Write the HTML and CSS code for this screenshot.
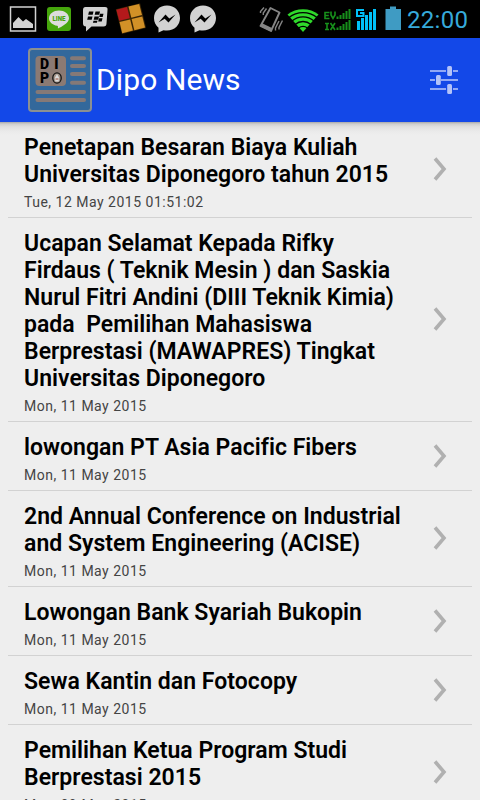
FILE: index.html
```html
<!DOCTYPE html>
<html lang="id">
<head>
<meta charset="utf-8">
<title>Dipo News</title>
<link rel="stylesheet" href="styles.css">
</head>
<body>
<svg class="defs" width="0" height="0">
  <symbol id="chevron" viewBox="0 0 16 26"><path d="M3 2.500 12 13 3 23.500" fill="none" stroke="#b0b0b0" stroke-width="3.600"/></symbol>
  <symbol id="messenger" viewBox="0 0 28 38"><path d="M14 5.500C6.500 5.500 1 11 1 18c0 4 1.700 7.500 4.500 9.700V32.500l5-2.300c1.100.3 2.300.4 3.500.4 7.500 0 13-5.300 13-12.500S21.500 5.500 14 5.500z" fill="#d2d2d2"/><path d="M5.500 22.500 12.500 14.500 16.300 18.400 22.500 14.500 15.500 22.500 11.700 18.800z" fill="#000"/></symbol>
</svg>
<div class="status">
  <svg class="s-image" width="30" height="38" viewBox="8 0 30 38"><rect x="10.500" y="7" width="25" height="24" fill="none" stroke="#d2d2d2" stroke-width="1.500"/><path d="M13 28v-5l5.500-6 4.500 4.500 3-2.500 7 5v4z" fill="#d2d2d2"/></svg>
  <svg class="s-line" width="26" height="38" viewBox="46 0 26 38"><rect x="47" y="7" width="24" height="24" rx="3" fill="#45a60c"/><path d="M59 10.500c-5.500 0-10 3.400-10 7.700 0 3.800 3.500 6.800 8.200 7.500 1 .3.800 1 .7 2.800 3.500-1.700 11.100-5.500 11.100-10.300 0-4.300-4.500-7.700-10-7.700z" fill="#dcdcdc"/><text class="line-word" x="52.500" y="20.800" textLength="13" lengthAdjust="spacingAndGlyphs">LINE</text></svg>
  <svg class="s-bbm" width="28" height="38" viewBox="81 0 28 38"><path d="M85.500 7H105q3 0 2.500 3l-1 13.500q0 3-3 3H91.500l-5.500 5v-5q-3 0-3-3V10q0-3 2.500-3z" fill="#d2d2d2"/><path d="M89 11.500h4.500l-.8 3.300h-4.500zM95.500 11.500h4.500l-.8 3.300h-4.500zM88 16.500h4.500l-.8 3.300h-4.500zM94.500 16.500h4.500l-.8 3.300h-4.500zM100 13.800h3.500l-.8 3.300h-3.500zM99 18.200h3.500l-.8 3.300h-3.500zM93.500 20.800h4l-.6 1.900h-4z" fill="#000"/></svg>
  <svg class="s-office" width="32" height="38" viewBox="114 0 32 38"><g transform="rotate(-14 130.500 18.700)"><rect x="118.500" y="6" width="25" height="25.500" fill="#3a2505"/><rect x="119" y="6.500" width="11" height="11.500" fill="#b3191b"/><rect x="131.500" y="6.500" width="11" height="11.500" fill="#d29127"/><rect x="119" y="19.300" width="11" height="11.500" fill="#d29127"/><rect x="131.500" y="19.300" width="11" height="11.500" fill="#d29127"/></g></svg>
  <svg class="s-msg" width="28" height="38"><use href="#messenger"/></svg>
  <svg class="s-msg2" width="28" height="38"><use href="#messenger"/></svg>
  <svg class="s-vibrate" width="26" height="38" viewBox="257 0 26 38"><g fill="none" stroke="#858585" stroke-width="1.400"><path d="M260.500 13v-1.500l3.500-4M263.300 15v-2l3.200-4.500M279 21l-3.500 7v2.500M282.500 20.500l-3.500 7v2"/></g><path d="M270.500 8 279.500 12.500 271 31 260.500 26z" fill="none" stroke="#858585" stroke-width="1.900" stroke-linejoin="round"/><path d="m261.500 23 10.500 5-1.500 3.500-10-5z" fill="#858585"/></svg>
  <svg class="s-wifi" width="32" height="38" viewBox="287 0 32 38"><path d="M303 32 287.500 14.500C296 7.500 310 7.500 318.500 14.500z" fill="#2fd92b"/><g fill="none" stroke="#000" stroke-width="1.400"><path d="M289 17.500c8-6.500 20-6.500 28 0M292 21c6.500-5.500 15.500-5.500 22 0M295 24.500c4.800-4 11.200-4 16 0M298.500 28c2.800-2 6.200-2 9 0"/></g></svg>
  <svg class="s-dual" width="28" height="38" viewBox="323 0 28 38"><g fill="none" stroke="#17901b" stroke-width="1.600"><path d="M329.500 12.500H325v6h4.500M325 15.500h3.800M331 11.500v3.500l2 3.500 2-3.500v-3.500M325 23.500h4M327 23.500v6M325 29.500h4M330.500 23l4.500 7M335 23l-4.500 7"/></g><path d="M336.500 16.500h2V19h-2zM339.500 15h2v4h-2zM342.500 13h2v6h-2zM345.500 11h2v8h-2zM348.500 9h2v10h-2zM336.500 27.500h2V30h-2zM339.500 26h2v4h-2zM342.500 24h2v6h-2zM345.500 22h2v8h-2zM348.500 20h2v10h-2z" fill="#17901b"/></svg>
  <svg class="s-gsm" width="20" height="38" viewBox="356 0 20 38"><path d="M364 10h-7v6h6.500v-3H360" fill="none" stroke="#00c0f8" stroke-width="2"/><path d="M357 21h3v9h-3zM361 18h3v12h-3zM365 15h3v15h-3zM369 12h3v18h-3zM373 9h3v21h-3z" fill="#00c0f8"/></svg>
  <svg class="s-battery" width="16" height="38" viewBox="385 0 16 38"><path d="M390 6.500h6V9h5v21h-15.500V9h4.500z" fill="#3f9bc3"/></svg>
  <span class="clock">22:00</span>
</div>
<header class="bar">
  <svg class="logo" width="64" height="64" viewBox="28 48 64 64"><rect x="29" y="49" width="62" height="62" rx="3" fill="#33689b" stroke="#8b9092" stroke-width="2"/><rect x="35.500" y="56" width="30.500" height="30" rx="4" fill="#8b7a73"/><g class="logo-letters"><text x="40" y="68.500">D</text><text x="54.200" y="68.500">I</text><text x="40" y="82.500">P</text></g><ellipse cx="57" cy="78" rx="4.200" ry="5.200" fill="#a39489" stroke="#111" stroke-width="1.300"/><path d="m57 74 2.200 4-.6 3.500h-3.200l-.6-3.500z" fill="#ddd"/><path d="M55.500 79h3" stroke="#9a4d37"/><path d="M72 58.200h12M72 66h12M72 74h12M72 82.800h12M37.500 92h46.500M37.500 100h46.500" stroke="#857977" stroke-width="4" stroke-linecap="round"/></svg>
  <h1 class="brand">Dipo News</h1>
  <svg class="tune" width="28" height="30" viewBox="430 65 28 30"><path d="M430 71h16M453 71h5M430 80h5M441 80h17M430 89h16M453 89h5" stroke="#91a8f5" stroke-width="2"/><g fill="#b4c3f8"><rect x="447.200" y="66" width="4.800" height="10" rx="1.500"/><rect x="436" y="75" width="4.800" height="10" rx="1.500"/><rect x="447.200" y="84" width="4.800" height="10" rx="1.500"/></g></svg>
</header>
<main class="list">
  <article class="item"><div class="text"><h2><span>Penetapan Besaran Biaya Kuliah</span><span>Universitas Diponegoro tahun 2015</span></h2><p>Tue, 12 May 2015 01:51:02</p></div><svg class="chev"><use href="#chevron"/></svg></article>
  <article class="item"><div class="text"><h2><span>Ucapan Selamat Kepada Rifky</span><span>Firdaus ( Teknik Mesin ) dan Saskia</span><span>Nurul Fitri Andini (DIII Teknik Kimia)</span><span>pada&nbsp; Pemilihan Mahasiswa</span><span>Berprestasi (MAWAPRES) Tingkat</span><span>Universitas Diponegoro</span></h2><p>Mon, 11 May 2015</p></div><svg class="chev"><use href="#chevron"/></svg></article>
  <article class="item"><div class="text"><h2><span>lowongan PT Asia Pacific Fibers</span></h2><p>Mon, 11 May 2015</p></div><svg class="chev"><use href="#chevron"/></svg></article>
  <article class="item"><div class="text"><h2><span>2nd Annual Conference on Industrial</span><span>and System Engineering (ACISE)</span></h2><p>Mon, 11 May 2015</p></div><svg class="chev"><use href="#chevron"/></svg></article>
  <article class="item"><div class="text"><h2><span>Lowongan Bank Syariah Bukopin</span></h2><p>Mon, 11 May 2015</p></div><svg class="chev"><use href="#chevron"/></svg></article>
  <article class="item"><div class="text"><h2><span>Sewa Kantin dan Fotocopy</span></h2><p>Mon, 11 May 2015</p></div><svg class="chev"><use href="#chevron"/></svg></article>
  <article class="item"><div class="text"><h2><span>Pemilihan Ketua Program Studi</span><span>Berprestasi 2015</span></h2><p>Mon, 09 May 2015</p></div><svg class="chev"><use href="#chevron"/></svg></article>
</main>
</body>
</html>
```
FILE: styles.css
```css
* { box-sizing: border-box; margin: 0; padding: 0; }
body { width: 480px; height: 800px; overflow: hidden; display: flex; flex-direction: column; background: #eee; font-family: Roboto, sans-serif; }
svg { display: block; flex: none; }
.defs { position: absolute; }
.status { flex: none; height: 38px; background: #000; display: flex; padding-left: 8px; }
.s-line { margin-left: 8px; }
.s-bbm { margin-left: 9px; }
.s-office { margin-left: 5px; }
.s-msg { margin-left: 7px; }
.s-msg2 { margin-left: 8px; }
.s-vibrate { margin-left: 40px; }
.s-wifi { margin-left: 4px; }
.s-dual { margin-left: 4px; }
.s-gsm { margin-left: 5px; }
.s-battery { margin-left: 9px; }
.line-word { font: 900 7px Roboto, sans-serif; fill: #45a60c; }
.clock { margin-left: 6px; font-size: 24px; line-height: 40px; color: #36aada; letter-spacing: .3px; }
.bar { flex: none; height: 84.5px; background: #1348e8; display: flex; align-items: center; padding: 0 22px 0 28px; border-bottom: 1px solid #4563b6; }
.logo-letters { font: 900 14px Roboto, sans-serif; fill: #000; }
.brand { flex: 1; margin-left: 4px; padding-top: 1px; font-size: 30px; font-weight: 400; line-height: 36px; letter-spacing: .1px; color: #fff; }
.list { flex: 1; min-height: 0; margin-top: -.5px; overflow: hidden; padding: 0 8px; background: linear-gradient(#a8a8a8 0, #cfcfcf 2px, #e0e0e0 5px, #eaeaea 9px, #eee 13px); }
.item { display: flex; align-items: center; justify-content: space-between; padding: 12px 24px 3px 16px; border-bottom: 1px solid #d2d2d2; }
.text { flex: none; }
h2 { font-size: 23px; font-weight: 600; line-height: 27px; color: #000; letter-spacing: .03px; }
h2 span { display: block; white-space: nowrap; }
p { font-size: 14px; line-height: 28px; height: 26px; color: #444; letter-spacing: .5px; }
.chev { width: 16px; height: 26px; margin-top: -10px; }
```
